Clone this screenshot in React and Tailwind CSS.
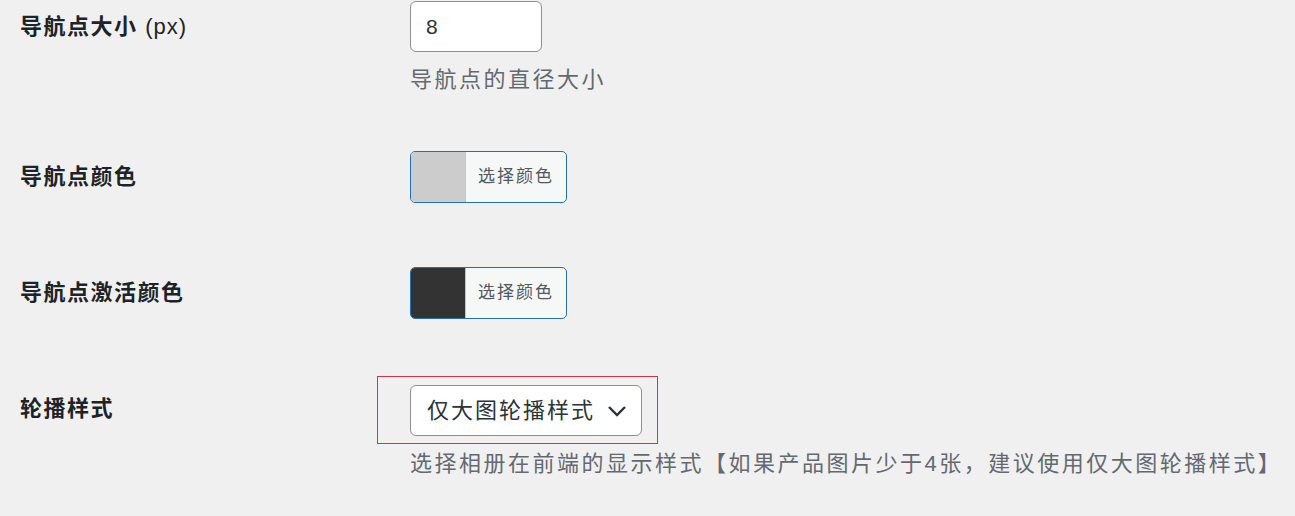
import React, { useState } from "react";

const font = { fontFamily: "'Liberation Sans', 'Noto Sans CJK SC', sans-serif" };

const ColorButton = ({ swatch }) => (
  <button
    type="button"
    className="flex h-[52px] w-[157px] overflow-hidden rounded-[5px] border-[1.5px] border-[#2271b1] bg-[#f6f7f7]"
  >
    <span className={`h-full w-[55px] border-r border-[#c3c4c7] ${swatch}`} />
    <span className="flex flex-1 items-center justify-center text-[17px] tracking-[2px] text-[#50575e]">
      选择颜色
    </span>
  </button>
);

const Label = ({ children }) => (
  <div className="w-[410px] shrink-0 pl-5 text-[22px] font-bold leading-[30px] tracking-[1.5px] text-[#1d2327]">
    {children}
  </div>
);

const Desc = ({ children, className = "" }) => (
  <p className={`text-[22px] leading-[30px] tracking-[2.5px] text-[#646970] ${className}`}>
    {children}
  </p>
);

export default function App() {
  const [size, setSize] = useState("8");

  return (
    <div className="h-[516px] w-full overflow-hidden bg-[#f0f0f1]" style={font}>
      {/* 导航点大小 */}
      <div className="flex">
        <div className="pt-3">
          <Label>
            导航点大小 <span className="font-normal tracking-[1px]">(px)</span>
          </Label>
        </div>
        <div className="pt-px">
          <input
            type="text"
            value={size}
            onChange={(e) => setSize(e.target.value)}
            className="h-[51px] w-[132px] rounded-[6px] border border-[#8c8f94] bg-white px-[15px] text-[21px] text-[#2c3338] outline-none"
          />
          <Desc className="mt-[13px]">导航点的直径大小</Desc>
        </div>
      </div>

      {/* 导航点颜色 */}
      <div className="mt-[56px] flex items-center">
        <Label>导航点颜色</Label>
        <ColorButton swatch="bg-[#cccccc]" />
      </div>

      {/* 导航点激活颜色 */}
      <div className="mt-[64px] flex items-center">
        <Label>导航点激活颜色</Label>
        <ColorButton swatch="bg-[#333333]" />
      </div>

      {/* 轮播样式 */}
      <div className="mt-[57px] flex">
        <div className="pt-[18px]">
          <Label>轮播样式</Label>
        </div>
        <div>
          <div className="-ml-[33px] w-[281px] border-[1.5px] border-[#d63638] pb-[7px] pl-[32px] pt-[8px]">
            <button
              type="button"
              className="flex h-[51px] w-[232px] items-center justify-between rounded-[6px] border border-[#8c8f94] bg-white pl-[16px] pr-[14px] text-[22px] tracking-[2px] text-[#2c3338]"
            >
              <span>仅大图轮播样式</span>
              <svg width="20" height="12" viewBox="0 0 20 12" fill="none">
                <path d="M2 2l8 8 8-8" stroke="#2c3338" strokeWidth="2.4" />
              </svg>
            </button>
          </div>
          <Desc className="mt-[5px] whitespace-nowrap">
            选择相册在前端的显示样式【如果产品图片少于4张，建议使用仅大图轮播样式】
          </Desc>
        </div>
      </div>
    </div>
  );
}
